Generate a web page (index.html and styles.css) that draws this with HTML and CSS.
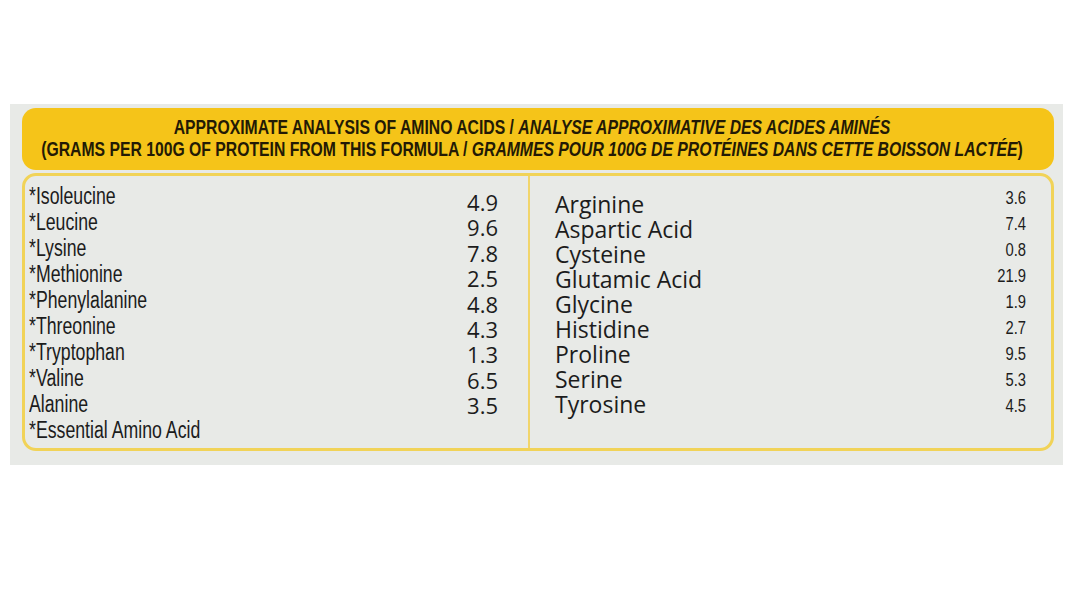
FILE: index.html
```html
<!DOCTYPE html>
<html lang="en">
<head>
<meta charset="utf-8">
<title>Amino Acids</title>
<link rel="stylesheet" href="styles.css">
</head>
<body>
<div class="label">
  <div class="header">
    <div class="hline"><span>APPROXIMATE ANALYSIS OF AMINO ACIDS / <i>ANALYSE APPROXIMATIVE DES ACIDES AMINÉS</i></span></div>
    <div class="hline"><span>(GRAMS PER 100G OF PROTEIN FROM THIS FORMULA / <i>GRAMMES POUR 100G DE PROTÉINES DANS CETTE BOISSON LACTÉE</i>)</span></div>
  </div>
  <div class="table">
    <div class="half left">
      <ul class="names cond">
        <li>*Isoleucine</li>
        <li>*Leucine</li>
        <li>*Lysine</li>
        <li>*Methionine</li>
        <li>*Phenylalanine</li>
        <li>*Threonine</li>
        <li>*Tryptophan</li>
        <li>*Valine</li>
        <li>Alanine</li>
        <li>*Essential Amino Acid</li>
      </ul>
      <ul class="vals wide">
        <li>4.9</li>
        <li>9.6</li>
        <li>7.8</li>
        <li>2.5</li>
        <li>4.8</li>
        <li>4.3</li>
        <li>1.3</li>
        <li>6.5</li>
        <li>3.5</li>
      </ul>
    </div>
    <div class="half right">
      <ul class="names wide">
        <li>Arginine</li>
        <li>Aspartic Acid</li>
        <li>Cysteine</li>
        <li>Glutamic Acid</li>
        <li>Glycine</li>
        <li>Histidine</li>
        <li>Proline</li>
        <li>Serine</li>
        <li>Tyrosine</li>
      </ul>
      <ul class="vals cond small">
        <li>3.6</li>
        <li>7.4</li>
        <li>0.8</li>
        <li>21.9</li>
        <li>1.9</li>
        <li>2.7</li>
        <li>9.5</li>
        <li>5.3</li>
        <li>4.5</li>
      </ul>
    </div>
  </div>
</div>
</body>
</html>
```
FILE: styles.css
```css
html, body {
  margin: 0;
  padding: 0;
  background: #ffffff;
}

body {
  padding-top: 104px;
  padding-left: 10px;
}

.label {
  width: 1053px;
  height: 361px;
  box-sizing: border-box;
  background: #e8eae7;
  padding: 4px 9px 0 12px;
}

.header {
  height: 62px;
  box-sizing: border-box;
  background: #f5c419;
  border-radius: 14px;
  padding: 8px 12px 0 0;
  color: #231a05;
  font-family: "Liberation Sans", sans-serif;
  font-weight: bold;
  font-size: 20px;
  line-height: 22px;
}

.hline {
  display: flex;
  justify-content: center;
  white-space: nowrap;
  transform: scaleX(0.787);
  transform-origin: 50% 50%;
}

.hline span {
  flex: none;
}

.header i {
  font-style: italic;
}

.table {
  margin-top: 3px;
  height: 278px;
  box-sizing: border-box;
  border: 3px solid #f1d358;
  border-radius: 14px;
  display: grid;
  grid-template-columns: 505px 1fr;
  color: #1c1c1c;
}

.half {
  display: flex;
  justify-content: space-between;
}

.left {
  border-right: 2px solid #f1d56b;
  padding: 7px 30px 0 4px;
}

.right {
  padding: 16px 25px 0 25px;
}

ul {
  list-style: none;
  margin: 0;
  padding: 0;
}

.cond {
  font-family: "Liberation Sans", sans-serif;
}

.cond li {
  white-space: nowrap;
}

.wide {
  font-family: "Open Sans", "Noto Sans", sans-serif;
}

.left .names {
  font-size: 23px;
  line-height: 26px;
}

.left .names li {
  transform: scaleX(0.77);
  transform-origin: 0 50%;
}

.left .vals {
  font-size: 22px;
  line-height: 25.4px;
  text-align: right;
  padding-top: 7px;
}

.right .names {
  font-size: 23px;
  line-height: 25px;
}

.right .vals {
  font-size: 18px;
  line-height: 26px;
  text-align: right;
  margin-top: -7px;
}

.right .vals li {
  transform: scaleX(0.82);
  transform-origin: 100% 50%;
}
```
